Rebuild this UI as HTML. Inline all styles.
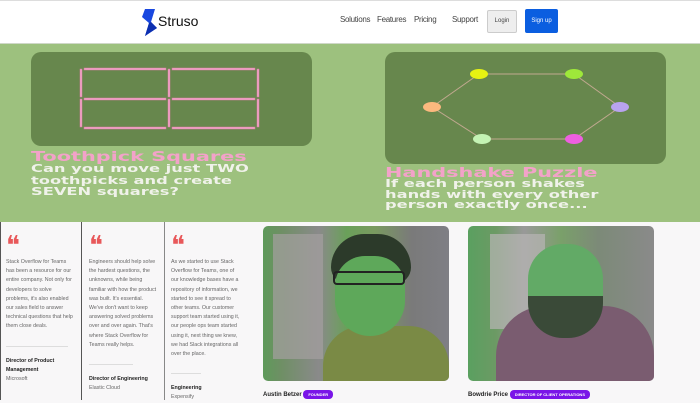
<!DOCTYPE html>
<html><head><style>
*{margin:0;padding:0;box-sizing:border-box}
body{width:700px;height:400px;overflow:hidden;background:#f8f7f8;font-family:"Liberation Sans",sans-serif;position:relative}
.abs{position:absolute}
nav{position:absolute;left:0;top:0;width:700px;height:44px;background:#fff;border-top:1px solid #ddd;border-bottom:1px solid #cfd8c8}
.nl{position:absolute;top:14px;font-size:8px;color:#444;letter-spacing:-0.3px}
.green{position:absolute;left:0;top:44px;width:700px;height:178px;background:#9dc17e}
.card{position:absolute;background:#67874d;border-radius:10px}
.t{position:absolute;color:#f3a2c9;font-weight:bold;font-size:13px;line-height:13px;font-family:"DejaVu Sans",sans-serif;transform:scaleX(1.6);transform-origin:0 0;white-space:nowrap}
.d{position:absolute;color:#f0f2ea;font-weight:bold;font-size:10.5px;line-height:11.5px;font-family:"DejaVu Sans",sans-serif;transform:scaleX(1.55);transform-origin:0 0;white-space:nowrap}
.col{position:absolute;top:222px;height:178px;font-size:5.3px;line-height:9.2px;color:#666}
.q{font-size:26px;color:#e8585a;font-family:"DejaVu Serif",serif;line-height:20px;height:22px}
.photo{position:absolute;top:226px;width:186px;height:155px;border-radius:5px;overflow:hidden}
.tag{display:inline-block;background:#7a15e8;color:#fff;font-size:4px;font-weight:bold;border-radius:4px;padding:2px 5px;vertical-align:middle}
.nm{position:absolute;top:390px;font-size:6px;font-weight:bold;color:#222}
</style></head><body>
<nav>
<svg class="abs" style="left:141px;top:8px" width="18" height="27" viewBox="0 0 18 27"><path d="M4 0H14L10 13L16 19L4 27L8 14L1 8Z" fill="#1948e0"/><path d="M10 13L16 19L4 27L8 14Z" fill="#0c2fb0"/></svg>
<div class="abs" style="left:158px;top:12px;font-size:14px;color:#111">Struso</div>
<div class="nl" style="left:340px">Solutions</div>
<div class="nl" style="left:377px">Features</div>
<div class="nl" style="left:414px">Pricing</div>
<div class="nl" style="left:452px">Support</div>
<div class="abs" style="left:487px;top:9px;width:30px;height:23px;background:#eee;border:1px solid #ccc;border-radius:2px;font-size:6px;color:#444;text-align:center;line-height:21px">Login</div>
<div class="abs" style="left:525px;top:8px;width:33px;height:24px;background:#0b5ee0;border-radius:2px;font-size:6px;color:#fff;text-align:center;line-height:24px">Sign up</div>
</nav>
<div class="green">
<div class="card" style="left:31px;top:8px;width:281px;height:94px">
<svg width="281" height="94">
<g fill="#f2a6c6" stroke="#d77aa4" stroke-width="0.5">
<rect x="49" y="17" width="2" height="28"/><rect x="49" y="47" width="2" height="28"/>
<rect x="137" y="17" width="2" height="28"/><rect x="137" y="47" width="2" height="28"/>
<rect x="226" y="17" width="2" height="28"/><rect x="226" y="47" width="2" height="28"/>
<rect x="53" y="16" width="82" height="2"/><rect x="141" y="16" width="83" height="2"/>
<rect x="53" y="46" width="82" height="2"/><rect x="141" y="46" width="83" height="2"/>
<rect x="53" y="75" width="82" height="2"/><rect x="141" y="75" width="83" height="2"/>
</g></svg></div>
<div class="t" style="left:31px;top:107px">Toothpick Squares</div>
<div class="d" style="left:31px;top:120px">Can you move just TWO<br>toothpicks and create<br>SEVEN squares?</div>
<div class="card" style="left:385px;top:8px;width:281px;height:112px">
<svg width="281" height="112">
<polygon points="94,22 189,22 235,55 189,87 97,87 47,55" fill="none" stroke="#c0a88f" stroke-width="1"/>
<ellipse cx="94" cy="22" rx="9" ry="5" fill="#e6f212"/>
<ellipse cx="189" cy="22" rx="9" ry="5" fill="#9ee83a"/>
<ellipse cx="235" cy="55" rx="9" ry="5" fill="#b9a3ef"/>
<ellipse cx="189" cy="87" rx="9" ry="5" fill="#ee5fe0"/>
<ellipse cx="97" cy="87" rx="9" ry="5" fill="#c4f3b4"/>
<ellipse cx="47" cy="55" rx="9" ry="5" fill="#fbb97e"/>
</svg></div>
<div class="t" style="left:385px;top:123px">Handshake Puzzle</div>
<div class="d" style="left:385px;top:135px;line-height:10.7px">If each person shakes<br>hands with every other<br>person exactly once...</div>
</div>
<div class="abs" style="left:0;top:222px;width:247px;height:178px;border-left:1px solid #555"></div>
<div class="col" style="left:0;width:82px;border-right:1px solid #555;padding:14px 6px">
<div class="q">❝</div>
Stack Overflow for Teams has been a resource for our entire company. Not only for developers to solve problems, it's also enabled our sales field to answer technical questions that help them close deals.
<div style="border-top:1px solid #ddd;margin:14px 0 10px;width:62px"></div>
<b style="color:#222">Director of Product Management</b><br>Microsoft</div>
<div class="col" style="left:83px;width:82px;border-right:1px solid #888;padding:14px 6px">
<div class="q">❝</div>
Engineers should help solve the hardest questions, the unknowns, while being familiar with how the product was built. It's essential. We've don't want to keep answering solved problems over and over again. That's where Stack Overflow for Teams really helps.
<div style="border-top:1px solid #ddd;margin:14px 0 10px;width:44px"></div>
<b style="color:#222">Director of Engineering</b><br>Elastic Cloud</div>
<div class="col" style="left:165px;width:82px;padding:14px 6px">
<div class="q">❝</div>
As we started to use Stack Overflow for Teams, one of our knowledge bases have a repository of information, we started to see it spread to other teams. Our customer support team started using it, our people ops team started using it, next thing we knew, we had Slack integrations all over the place.
<div style="border-top:1px solid #ddd;margin:14px 0 10px;width:30px"></div>
<b style="color:#222">Engineering</b><br>Expensify</div>
<div class="photo" style="left:263px;background:linear-gradient(90deg,#5e9a5a 0,#6f8f65 10%,#8a8a8a 30%,#6aa05a 45%,#7a9a60 60%,#7a7a7a 80%,#7f7f85 100%)">
<div class="abs" style="left:10px;top:8px;width:50px;height:125px;background:#a4a0a0;opacity:.7"></div>
<div class="abs" style="left:60px;top:100px;width:126px;height:60px;background:#7a8a45;border-radius:40px 40px 0 0"></div>
<div class="abs" style="left:68px;top:8px;width:80px;height:50px;background:#2c3a2a;border-radius:40px 40px 20px 20px"></div>
<div class="abs" style="left:72px;top:30px;width:70px;height:80px;background:#5ea85a;border-radius:30px 30px 35px 35px"></div>
<div class="abs" style="left:70px;top:45px;width:72px;height:14px;border:2px solid #222;border-radius:4px"></div>
</div>
<div class="photo" style="left:468px;background:linear-gradient(90deg,#5aa060 0,#6c9a64 15%,#999 30%,#7aa06a 50%,#7c8a78 70%,#8a8a8a 100%)">
<div class="abs" style="left:22px;top:8px;width:55px;height:95px;background:#b8b5b5;opacity:.7"></div>
<div class="abs" style="left:28px;top:80px;width:158px;height:80px;background:#7a5c70;border-radius:50px 50px 0 0"></div>
<div class="abs" style="left:60px;top:18px;width:75px;height:90px;background:#62aa66;border-radius:35px 35px 35px 35px"></div>
<div class="abs" style="left:60px;top:70px;width:75px;height:42px;background:#3a4a38;border-radius:0 0 35px 35px"></div>
</div>
<div class="nm" style="left:263px">Austin Betzer <span class="tag">FOUNDER</span></div>
<div class="nm" style="left:468px">Bowdrie Price <span class="tag">DIRECTOR OF CLIENT OPERATIONS</span></div>
</body></html>
